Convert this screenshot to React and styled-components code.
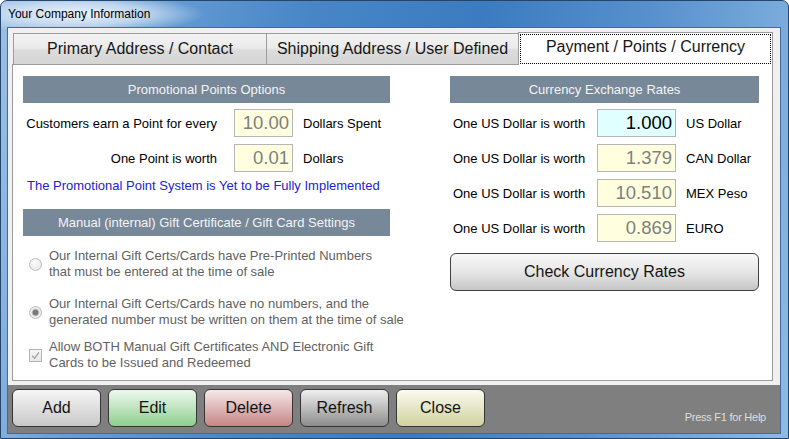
import React from "react";
import styled, { createGlobalStyle, css } from "styled-components";

const GlobalStyle = createGlobalStyle`
  html, body {
    margin: 0;
    padding: 0;
  }
  body {
    font-family: "Liberation Sans", Arial, sans-serif;
    background: #ffffff;
  }
  * {
    box-sizing: border-box;
  }
`;

const Window = styled.div`
  width: 789px;
  height: 439px;
  display: flex;
  flex-direction: column;
  padding: 0 7px 4px 6px;
  border: 1px solid #26456b;
  border-radius: 7px 7px 0 0;
  overflow: hidden;
  background:
    radial-gradient(ellipse 125px 20px at 78px 13px, rgba(240, 246, 252, 0.95) 0%, rgba(222, 234, 247, 0.7) 55%, rgba(222, 234, 247, 0) 100%),
    linear-gradient(100deg, #9cc0e6 0%, #6a9fd6 16%, #4886c6 36%, #3b7bbf 56%, #5891cd 76%, #8ebbe4 100%);
`;

const TitleBar = styled.div`
  flex: none;
  height: 26px;
  display: flex;
  align-items: center;
  padding-left: 1px;
  font-size: 12px;
  color: #000;
`;

const Client = styled.div`
  flex: 1;
  min-height: 0;
  display: flex;
  flex-direction: column;
  background: #f0f0f0;
  border: 1px solid #44699a;
`;

const TabArea = styled.div`
  flex: 1;
  min-height: 0;
  display: flex;
  flex-direction: column;
  padding: 4px 7px 4px 4px;
`;

const TabStrip = styled.div`
  flex: none;
  height: 32px;
  display: flex;
  align-items: flex-end;
  padding-left: 2px;
`;

const Tab = styled.div`
  width: ${(p) => p.$w}px;
  height: 31px;
  display: flex;
  align-items: stretch;
  padding: 1px;
  font-size: 16px;
  color: #161616;
  border: 1px solid #9c9c9c;
  border-bottom: none;
  margin-left: -1px;
  background: linear-gradient(180deg, #f3f3f3 0%, #ebebeb 45%, #dcdcdc 55%, #d5d5d5 100%);

  ${(p) =>
    p.$active &&
    css`
      position: relative;
      z-index: 1;
      height: 33px;
      margin-bottom: -1px;
      background: #ffffff;
    `}
`;

const TabLabel = styled.div`
  flex: 1;
  display: flex;
  align-items: center;
  justify-content: center;
  border: 1px dotted transparent;

  ${(p) =>
    p.$active &&
    css`
      border-color: #000;
      padding-bottom: 4px;
    `}
`;

const Page = styled.div`
  flex: 1;
  min-height: 0;
  background: #ffffff;
  border: 1px solid #9c9c9c;
  padding: 11px 13px 0 10px;
`;

const Columns = styled.div`
  display: grid;
  grid-template-columns: 367px 309px;
  column-gap: 60px;
  align-items: start;
`;

const Column = styled.div`
  display: flex;
  flex-direction: column;
`;

const SectionHeader = styled.div`
  height: 27px;
  display: flex;
  align-items: center;
  justify-content: center;
  background: #778899;
  color: #f4f4f4;
  font-size: 13px;
  margin-top: ${(p) => p.$mt || 0}px;
`;

const FieldRow = styled.div`
  height: 28px;
  display: flex;
  align-items: center;
  margin-top: ${(p) => p.$mt}px;
  font-size: 13px;
  color: #000;
`;

const FieldLabel = styled.div`
  width: ${(p) => p.$w}px;
  text-align: ${(p) => p.$align || "left"};
  padding-left: ${(p) => p.$pl || 0}px;
  margin-right: ${(p) => p.$gap}px;
  white-space: nowrap;
`;

const ValueBox = styled.div`
  width: ${(p) => p.$w}px;
  height: 28px;
  border: 1px solid #b6b6b6;
  background: ${(p) => (p.$base ? "#e0ffff" : "#ffffe0")};
  color: ${(p) => (p.$base ? "#000" : "#808080")};
  font-size: 18.5px;
  line-height: 26px;
  text-align: right;
  padding-right: 3px;
`;

const Unit = styled.div`
  margin-left: 10px;
  white-space: nowrap;
`;

const Notice = styled.div`
  margin-top: 6px;
  padding-left: 4px;
  font-size: 13px;
  line-height: 16px;
  color: #2323d2;
  white-space: nowrap;
`;

const Option = styled.div`
  display: flex;
  align-items: center;
  gap: 7px;
  padding-left: 6px;
  margin-top: ${(p) => p.$mt}px;
  font-size: 13px;
  line-height: 16px;
  color: #626262;
  white-space: nowrap;
`;

const Radio = styled.span`
  flex: none;
  width: 13px;
  height: 13px;
  border-radius: 50%;
  border: 1px solid #bdbdbd;
  background: ${(p) =>
    p.$checked
      ? "radial-gradient(circle, #7a7a7a 0 2.4px, #b9b9b9 3.2px, #eeeeee 4.2px, #e2e2e2 100%)"
      : "radial-gradient(circle at 40% 35%, #fbfbfb, #e3e3e3)"};
`;

const Check = styled.span`
  flex: none;
  width: 13px;
  height: 13px;
  border: 1px solid #b4b4b4;
  background: linear-gradient(180deg, #f6f6f6, #e9e9e9);
  display: flex;
  align-items: center;
  justify-content: center;
`;

const WideButton = styled.div`
  margin-top: 11px;
  height: 38px;
  display: flex;
  align-items: center;
  justify-content: center;
  border: 1px solid #404040;
  border-radius: 6px;
  background: linear-gradient(180deg, #f8f8f8 0%, #e6e6e6 50%, #c6c6c6 100%);
  font-size: 16px;
  color: #141414;
`;

const tones = {
  plain: ["#f6f6f6", "#c8c8c8"],
  green: ["#eef8ee", "#8ecf8e"],
  red: ["#f6e8e8", "#c78585"],
  gray: ["#efefef", "#8c8c8c"],
  yellow: ["#fbfbef", "#d1d19f"],
};

const Footer = styled.div`
  flex: none;
  height: 48px;
  display: flex;
  align-items: flex-start;
  gap: 7px;
  padding: 4px 14px 0 4px;
  background: #7f7f7f;
`;

const ActionButton = styled.div`
  width: 89px;
  height: 38px;
  display: flex;
  align-items: center;
  justify-content: center;
  border: 1px solid #353535;
  border-radius: 6px;
  font-size: 16px;
  color: #141414;
  background: linear-gradient(180deg, ${(p) => tones[p.$tone][0]} 0%, ${(p) => tones[p.$tone][1]} 100%);
`;

const HelpText = styled.div`
  margin-left: auto;
  align-self: flex-end;
  margin-bottom: 10px;
  font-size: 11px;
  letter-spacing: -0.25px;
  color: #dedede;
`;

const rates = [
  { value: "1.000", unit: "US Dollar", base: true },
  { value: "1.379", unit: "CAN Dollar" },
  { value: "10.510", unit: "MEX Peso" },
  { value: "0.869", unit: "EURO" },
];

const buttons = [
  { label: "Add", tone: "plain" },
  { label: "Edit", tone: "green" },
  { label: "Delete", tone: "red" },
  { label: "Refresh", tone: "gray" },
  { label: "Close", tone: "yellow" },
];

export default function App() {
  return (
    <>
      <GlobalStyle />
      <Window>
        <TitleBar>Your Company Information</TitleBar>
        <Client>
          <TabArea>
            <TabStrip>
              <Tab $w={254}>
                <TabLabel>Primary Address / Contact</TabLabel>
              </Tab>
              <Tab $w={253}>
                <TabLabel>Shipping Address / User Defined</TabLabel>
              </Tab>
              <Tab $w={255} $active>
                <TabLabel $active>Payment / Points / Currency</TabLabel>
              </Tab>
            </TabStrip>
            <Page>
              <Columns>
                <Column>
                  <SectionHeader>Promotional Points Options</SectionHeader>
                  <FieldRow $mt={6}>
                    <FieldLabel $w={194} $align="right" $gap={17}>
                      Customers earn a Point for every
                    </FieldLabel>
                    <ValueBox $w={59}>10.00</ValueBox>
                    <Unit>Dollars Spent</Unit>
                  </FieldRow>
                  <FieldRow $mt={7}>
                    <FieldLabel $w={194} $align="right" $gap={17}>
                      One Point is worth
                    </FieldLabel>
                    <ValueBox $w={59}>0.01</ValueBox>
                    <Unit>Dollars</Unit>
                  </FieldRow>
                  <Notice>The Promotional Point System is Yet to be Fully Implemented</Notice>

                  <SectionHeader $mt={15}>
                    Manual (internal) Gift Certificate / Gift Card Settings
                  </SectionHeader>
                  <Option $mt={12}>
                    <Radio />
                    <span>
                      Our Internal Gift Certs/Cards have Pre-Printed Numbers
                      <br />
                      that must be entered at the time of sale
                    </span>
                  </Option>
                  <Option $mt={16}>
                    <Radio $checked />
                    <span>
                      Our Internal Gift Certs/Cards have no numbers, and the
                      <br />
                      generated number must be written on them at the time of sale
                    </span>
                  </Option>
                  <Option $mt={11}>
                    <Check>
                      <svg width="9" height="9" viewBox="0 0 9 9">
                        <polyline
                          points="1.2,4.8 3.6,7.4 7.9,1.4"
                          fill="none"
                          stroke="#a6a6a6"
                          strokeWidth="1.4"
                        />
                      </svg>
                    </Check>
                    <span>
                      Allow BOTH Manual Gift Certificates AND Electronic Gift
                      <br />
                      Cards to be Issued and Redeemed
                    </span>
                  </Option>
                </Column>

                <Column>
                  <SectionHeader>Currency Exchange Rates</SectionHeader>
                  {rates.map((r, i) => (
                    <FieldRow key={r.unit} $mt={i === 0 ? 6 : 7}>
                      <FieldLabel $w={147} $pl={3} $gap={0}>
                        One US Dollar is worth
                      </FieldLabel>
                      <ValueBox $w={79} $base={r.base}>
                        {r.value}
                      </ValueBox>
                      <Unit>{r.unit}</Unit>
                    </FieldRow>
                  ))}
                  <WideButton>Check Currency Rates</WideButton>
                </Column>
              </Columns>
            </Page>
          </TabArea>
          <Footer>
            {buttons.map((b) => (
              <ActionButton key={b.label} $tone={b.tone}>
                {b.label}
              </ActionButton>
            ))}
            <HelpText>Press F1 for Help</HelpText>
          </Footer>
        </Client>
      </Window>
    </>
  );
}
